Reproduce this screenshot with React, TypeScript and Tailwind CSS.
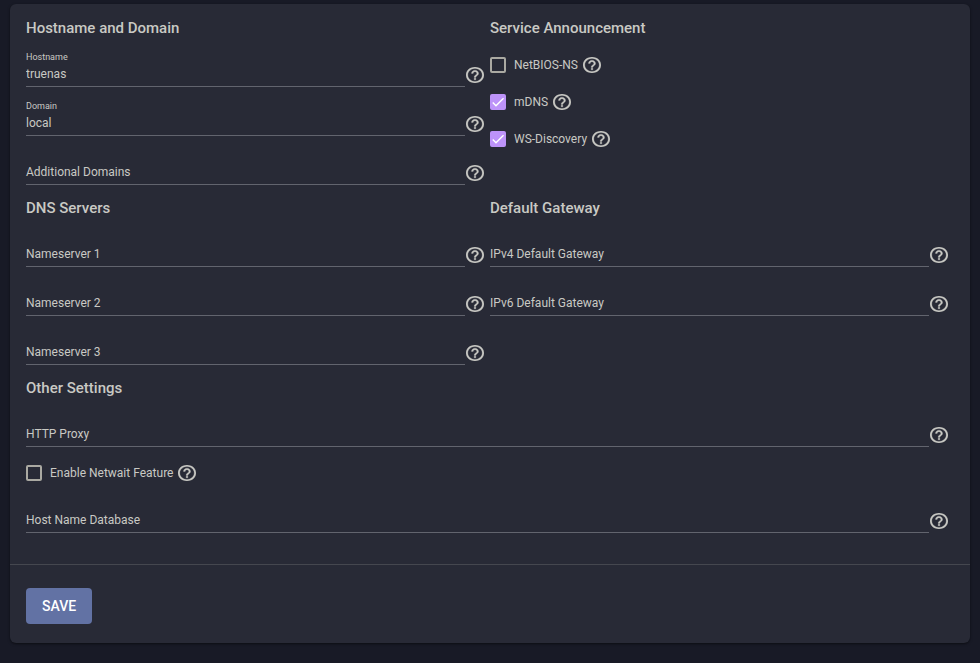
import React, { useState } from 'react';
import { clsx } from 'clsx';

const HelpIcon: React.FC = () => (
  <svg viewBox="2 2 20 20" className="h-4 w-[18px]" preserveAspectRatio="none" fill="currentColor" stroke="currentColor" strokeWidth="0.3" aria-hidden="true">
    <path d="M11 18h2v-2h-2v2zm1-16C6.48 2 2 6.48 2 12s4.48 10 10 10 10-4.48 10-10S17.52 2 12 2zm0 18c-4.41 0-8-3.59-8-8s3.59-8 8-8 8 3.59 8 8-3.59 8-8 8zm0-14c-2.21 0-4 1.79-4 4h2c0-1.1.9-2 2-2s2 .9 2 2c0 2-3 1.75-3 5h2c0-2.25 3-2.5 3-5 0-2.21-1.79-4-4-4z" />
  </svg>
);

const HelpButton: React.FC<{ label: string }> = ({ label }) => (
  <button type="button" aria-label={`Help: ${label}`} className="shrink-0 cursor-help">
    <HelpIcon />
  </button>
);

interface TextFieldProps {
  id: string;
  label: string;
  initial?: string;
  multiline?: boolean;
}

const TextField: React.FC<TextFieldProps> = ({ id, label, initial = '', multiline = false }) => {
  const [value, setValue] = useState(initial);
  const [focused, setFocused] = useState(false);
  const floating = focused || value !== '';

  const shared = {
    id,
    value,
    onFocus: () => setFocused(true),
    onBlur: () => setFocused(false),
  };

  return (
    <div className="flex items-end gap-px pr-1.5">
      <div className="relative min-w-0 flex-1 border-b border-[#62646e] pt-6">
        <label
          htmlFor={id}
          className={clsx(
            'pointer-events-none absolute left-0',
            floating ? 'top-3 text-[9px] leading-3.5' : 'top-7 text-xs leading-4'
          )}
        >
          {label}
        </label>
        {multiline ? (
          <textarea
            {...shared}
            rows={1}
            onChange={(e) => setValue(e.target.value)}
            className="block h-6 w-full resize-none bg-transparent pt-1 text-xs outline-none"
          />
        ) : (
          <input
            {...shared}
            type="text"
            onChange={(e) => setValue(e.target.value)}
            className="block h-6 w-full bg-transparent text-xs outline-none"
          />
        )}
      </div>
      <div className="flex pb-1">
        <HelpButton label={label} />
      </div>
    </div>
  );
};

interface CheckFieldProps {
  id: string;
  label: string;
  initial?: boolean;
}

const CheckField: React.FC<CheckFieldProps> = ({ id, label, initial = false }) => {
  const [checked, setChecked] = useState(initial);

  return (
    <div className="flex h-[18px] items-center">
      <span className="relative flex size-4 shrink-0">
        <input
          id={id}
          type="checkbox"
          checked={checked}
          onChange={(e) => setChecked(e.target.checked)}
          className="size-4 appearance-none rounded-xs border-2 border-[#aaa9a2] checked:border-[#bd93f9] checked:bg-[#bd93f9]"
        />
        {checked && (
          <svg viewBox="0 0 24 24" className="pointer-events-none absolute inset-0 size-4" fill="none" stroke="white" strokeWidth="2.1">
            <path d="M4.1 12.7 9 17.6 20.3 6.3" />
          </svg>
        )}
      </span>
      <label htmlFor={id} className="mr-[5px] ml-2 text-xs leading-4">
        {label}
      </label>
      <HelpButton label={label} />
    </div>
  );
};

const Section: React.FC<{ title: string; children: React.ReactNode }> = ({ title, children }) => (
  <fieldset className="min-w-0">
    <legend className="pb-0.5 text-[15px] leading-4 font-medium">{title}</legend>
    {children}
  </fieldset>
);

export default function App() {
  return (
    <div className="min-h-screen bg-[#181a26] px-2.5 pt-1 pb-5 font-['Roboto','Liberation_Sans',sans-serif] text-[#c9c9c4]">
      <form onSubmit={(e) => e.preventDefault()} className="rounded-md bg-[#282a36] shadow-sm shadow-black/40">
        <div className="px-4 pt-4 pb-[31px]">
          <div className="grid grid-cols-2 gap-y-[15px]">
            <Section title="Hostname and Domain">
              <TextField id="hostname" label="Hostname" initial="truenas" />
              <TextField id="domain" label="Domain" initial="local" />
              <TextField id="domains" label="Additional Domains" />
            </Section>
            <Section title="Service Announcement">
              <div className="flex flex-col gap-[19px] pt-[18px]">
                <CheckField id="netbios" label="NetBIOS-NS" />
                <CheckField id="mdns" label="mDNS" initial />
                <CheckField id="wsd" label="WS-Discovery" initial />
              </div>
            </Section>
            <Section title="DNS Servers">
              <TextField id="nameserver1" label="Nameserver 1" />
              <TextField id="nameserver2" label="Nameserver 2" />
              <TextField id="nameserver3" label="Nameserver 3" />
            </Section>
            <Section title="Default Gateway">
              <TextField id="ipv4gateway" label="IPv4 Default Gateway" />
              <TextField id="ipv6gateway" label="IPv6 Default Gateway" />
            </Section>
          </div>
          <div className="pt-[15px]">
            <Section title="Other Settings">
              <TextField id="httpproxy" label="HTTP Proxy" />
              <div className="pt-[17px] pb-0.5">
                <CheckField id="netwait" label="Enable Netwait Feature" />
              </div>
              <TextField id="hosts" label="Host Name Database" multiline />
            </Section>
          </div>
        </div>
        <div className="border-t border-[#45474f] px-4 pt-[23px] pb-[19px]">
          <button type="submit" className="h-9 rounded-sm bg-[#6272a4] px-4 text-sm font-medium text-white uppercase">
            Save
          </button>
        </div>
      </form>
    </div>
  );
}
